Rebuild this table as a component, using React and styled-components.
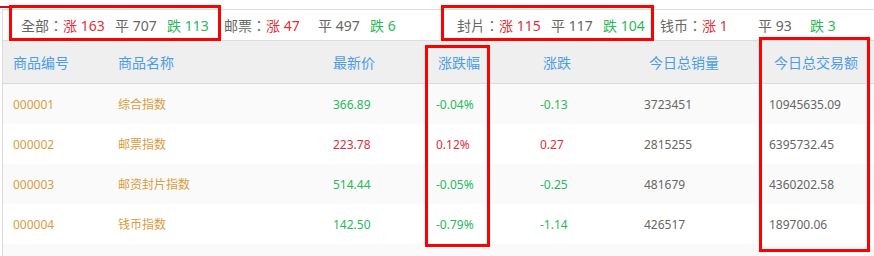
import styled, { createGlobalStyle } from "styled-components";

const GlobalStyle = createGlobalStyle`
  body {
    margin: 0;
    background: #fff;
    font-family: "Noto Sans", "Noto Sans CJK SC", sans-serif;
  }
`;

const RED = "#e0313b";
const GREEN = "#27b95a";
const GOLD = "#d99d42";
const BLUE = "#4b9de6";
const GRAY = "#666";

const Wrapper = styled.div`
  position: relative;
  width: 874px;
  height: 256px;
  overflow: hidden;
  padding-top: 6px;
  box-sizing: border-box;
`;

const TabMark = styled.div`
  width: 62px;
  height: 2px;
  background: #c3111f;
  margin-bottom: 1px;
`;

const Panel = styled.div`
  margin-left: 2px;
  border-top: 1px solid #dcdcdc;
  border-left: 1px solid #dcdcdc;
`;

const StatsBar = styled.div`
  display: grid;
  grid-template-columns: 436px 1fr;
  height: 30px;
  border-bottom: 1px solid #dcdcdc;
  font-size: 14px;
  color: ${GRAY};
`;

const Half = styled.div`
  display: flex;
  align-items: center;
  padding-left: 18px;
`;

const Group = styled.div`
  display: flex;
  align-items: center;
  width: 203px;
  white-space: nowrap;
`;

const Label = styled.span`
  width: 42px;
  font-family: "Noto Sans CJK TC", "Noto Sans CJK SC", sans-serif;
`;

const Stat = styled.span`
  width: ${(p) => p.$w || 52}px;
  color: ${(p) => p.color || GRAY};
`;

const Row = styled.div`
  display: grid;
  grid-template-columns: 105px 215px 103px 104px 104px 125px 1fr;
  align-items: center;
  padding-left: 10px;
  height: 40px;
  font-size: 12px;
  background: ${(p) => (p.$alt ? "#fafafa" : "#fff")};
`;

const HeadRow = styled(Row)`
  height: 42px;
  font-size: 14px;
  color: ${BLUE};
  background: #efefef;
  border-bottom: 1px solid #dcdcdc;
`;

const HeadCell = styled.div`
  padding-left: ${(p) => p.$shift || 0}px;
`;

const Cell = styled.div`
  color: ${(p) => p.color || GRAY};
  white-space: nowrap;
`;

const Mark = styled.div`
  position: absolute;
  box-sizing: border-box;
  border: 3px solid #ff0000;
`;

const groups = [
  [
    { name: "全部", up: 163, flat: 707, down: 113 },
    { name: "邮票", up: 47, flat: 497, down: 6 },
  ],
  [
    { name: "封片", up: 115, flat: 117, down: 104 },
    { name: "钱币", up: 1, flat: 93, down: 3, upW: 56 },
  ],
];

const heads = [
  ["商品编号", 0],
  ["商品名称", 0],
  ["最新价", 0],
  ["涨跌幅", 2],
  ["涨跌", 3],
  ["今日总销量", 5],
  ["今日总交易额", 5],
];

const rows = [
  ["000001", "综合指数", "366.89", "-0.04%", "-0.13", "3723451", "10945635.09"],
  ["000002", "邮票指数", "223.78", "0.12%", "0.27", "2815255", "6395732.45"],
  ["000003", "邮资封片指数", "514.44", "-0.05%", "-0.25", "481679", "4360202.58"],
  ["000004", "钱币指数", "142.50", "-0.79%", "-1.14", "426517", "189700.06"],
];

const trend = (v) => (v.startsWith("-") ? GREEN : RED);

export default function App() {
  return (
    <Wrapper>
      <GlobalStyle />
      <TabMark />
      <Panel>
        <StatsBar>
          {groups.map((half, i) => (
            <Half key={i}>
              {half.map((g) => (
                <Group key={g.name}>
                  <Label>{g.name}：</Label>
                  <Stat color={RED} $w={g.upW}>涨 {g.up}</Stat>
                  <Stat>平 {g.flat}</Stat>
                  <Stat color={GREEN}>跌 {g.down}</Stat>
                </Group>
              ))}
            </Half>
          ))}
        </StatsBar>
        <HeadRow>
          {heads.map(([t, s]) => (
            <HeadCell key={t} $shift={s}>
              {t}
            </HeadCell>
          ))}
        </HeadRow>
        {rows.map((r, i) => (
          <Row key={r[0]} $alt={i % 2 === 0}>
            <Cell color={GOLD}>{r[0]}</Cell>
            <Cell color={GOLD}>{r[1]}</Cell>
            <Cell color={trend(r[3])}>{r[2]}</Cell>
            <Cell color={trend(r[3])}>{r[3]}</Cell>
            <Cell color={trend(r[4])}>{r[4]}</Cell>
            <Cell>{r[5]}</Cell>
            <Cell>{r[6]}</Cell>
          </Row>
        ))}
        <Row $alt />
      </Panel>
      <Mark style={{ left: 9, top: 5, width: 212, height: 36 }} />
      <Mark style={{ left: 441, top: 5, width: 213, height: 36 }} />
      <Mark style={{ left: 425, top: 45, width: 65, height: 202 }} />
      <Mark style={{ left: 759, top: 37, width: 111, height: 215 }} />
    </Wrapper>
  );
}
